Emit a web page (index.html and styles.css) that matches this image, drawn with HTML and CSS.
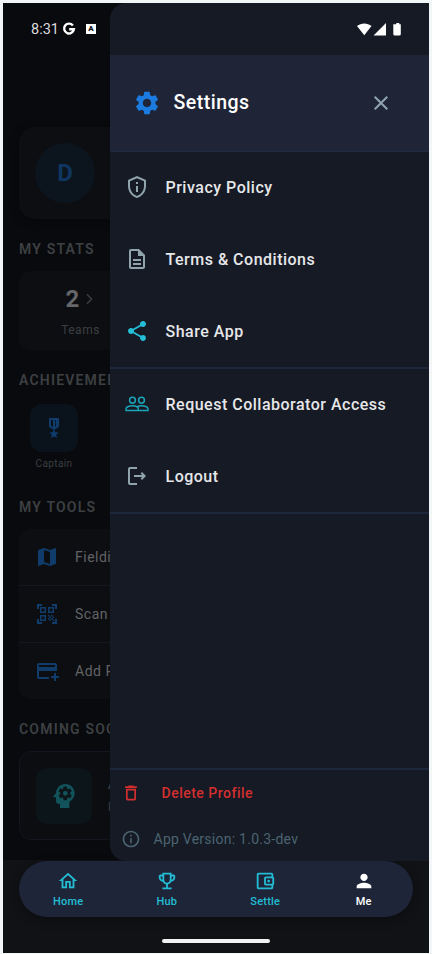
FILE: index.html
```html
<!DOCTYPE html>
<html lang="en">
<head>
<meta charset="utf-8">
<title>Settings</title>
<link rel="stylesheet" href="styles.css">
</head>
<body>
<div class="screen">
  <main class="page">
    <section class="profile"><div class="avatar">D</div></section>
    <h2 class="heading">MY STATS</h2>
    <section class="stats">
      <div class="stat">
        <div class="stat-value">2<svg class="chevron" viewBox="0 0 7 12"><path d="M1 1.2 5.6 6 1 10.8" fill="none" stroke="currentColor" stroke-width="1.4"/></svg></div>
        <div class="stat-label">Teams</div>
      </div>
    </section>
    <h2 class="heading">ACHIEVEMENTS</h2>
    <section class="badge">
      <div class="badge-tile"><svg class="i24" viewBox="0 0 24 24"><path d="M17 10.430V2H7v8.430c0 .35.18.68.49.86l4.180 2.510-.99 2.340-3.410.29 2.590 2.240L9.070 22 12 20.230 14.930 22l-.78-3.330 2.590-2.240-3.410-.29-.99-2.340 4.180-2.510c.3-.18.48-.5.48-.86zm-6 .64-2-1.200V4h2v7.070zm4-1.200-2 1.200V4h.7v6.500l1.300-.63z" fill-rule="evenodd"/></svg></div>
      <div class="badge-label">Captain</div>
    </section>
    <h2 class="heading">MY TOOLS</h2>
    <section class="tools">
      <div class="tool"><svg class="i24" viewBox="0 0 24 24"><path d="m20.500 3-.16.03L15 5.100 9 3 3.360 4.900c-.21.07-.36.25-.36.48V20.500c0 .28.22.5.5.5l.16-.03L9 18.900l6 2.100 5.640-1.900c.21-.07.36-.25.36-.48V3.500c0-.28-.22-.5-.5-.5zM15 19l-6-2.110V5l6 2.110V19z"/></svg>Fielding</div>
      <div class="tool"><svg class="i24" viewBox="0 0 24 24"><path d="M9.500 6.500v3h-3v-3h3M11 5H5v6h6V5zm-1.500 9.500v3h-3v-3h3M11 13H5v6h6v-6zm6.500-6.500v3h-3v-3h3M19 5h-6v6h6V5zm-6 8h1.500v1.500H13V13zm1.500 1.500H16V16h-1.500v-1.500zM16 13h1.500v1.500H16V13zm-3 3h1.500v1.500H13V16zm1.500 1.500H16V19h-1.500v-1.500zM16 16h1.500v1.500H16V16zm1.500-1.500H19V16h-1.500v-1.500zm0 3H19V19h-1.500v-1.500zM22 7h-2V4h-3V2h5v5zm0 15v-5h-2v3h-3v2h5zM2 22h5v-2H4v-3H2v5zM2 2v5h2V4h3V2H2z"/></svg>Scan</div>
      <div class="tool"><svg class="i24" viewBox="0 0 24 24"><path d="M20 4H4c-1.110 0-1.990.89-1.990 2L2 18c0 1.110.89 2 2 2h10v-2H4v-6h18V6c0-1.110-.89-2-2-2zm0 4H4V6h16v2zm4 9v2h-3v3h-2v-3h-3v-2h3v-3h2v3h3z"/></svg>Add P</div>
    </section>
    <h2 class="heading">COMING SOON</h2>
    <section class="soon">
      <div class="soon-tile"><svg class="i32" viewBox="0 0 24 24"><path fill-rule="evenodd" d="M13 3C9.230 3 6.190 5.950 6 9.660l-1.920 2.530c-.24.33 0 .81.42.81H6v3c0 1.100.9 2 2 2h1v3h7v-4.690c2.370-1.120 4-3.510 4-6.310 0-3.860-3.120-7-7-7zm3.600 7c0 .2-.01.39-.04.58l1.120.88c.1.08.13.23.06.34l-1 1.730c-.06.11-.2.150-.310.110l-1.240-.5c-.260.2-.540.370-.850.490l-.190 1.320c-.020.120-.120.210-.250.210h-2c-.120 0-.230-.090-.250-.210l-.190-1.320c-.300-.120-.590-.290-.850-.490l-1.240.5c-.110.040-.240 0-.310-.110l-1-1.730c-.060-.110-.040-.240.060-.320l1.060-.83A4 4 0 0 1 9.140 10c0-.2.010-.39.040-.58L8.120 8.590c-.090-.080-.120-.210-.060-.320l1-1.730c.060-.110.190-.150.310-.110l1.240.5c.260-.2.550-.370.850-.490l.190-1.320c.020-.120.130-.210.250-.210h2c.130 0 .230.090.250.210l.190 1.320c.300.120.590.290.850.490l1.240-.5c.110-.040.250 0 .310.110l1 1.730c.060.110.040.240-.060.320l-1.120.83c.030.190.040.380.040.580zM13 8.200a1.800 1.800 0 1 0 0 3.600 1.800 1.800 0 0 0 0-3.600z"/></svg></div>
      <div class="soon-text"><b>AI</b><span>P</span></div>
    </section>
  </main>

  <footer class="dock">
    <nav class="nav">
      <div class="nav-item"><svg viewBox="0 0 24 24"><path d="m12 5.690 5 4.500V18h-2v-6H9v6H7v-7.810l5-4.500M12 3 2 12h3v8h6v-6h2v6h6v-8h3L12 3z"/></svg>Home</div>
      <div class="nav-item"><svg viewBox="0 0 24 24"><path d="M19 5h-2V3H7v2H5c-1.100 0-2 .9-2 2v1c0 2.550 1.920 4.630 4.390 4.940.63 1.500 1.980 2.630 3.610 2.960V19H7v2h10v-2h-4v-3.100c1.630-.33 2.980-1.460 3.610-2.960C19.080 12.630 21 10.550 21 8V7c0-1.100-.9-2-2-2zM5 8V7h2v3.820C5.840 10.400 5 9.300 5 8zm7 6c-1.650 0-3-1.350-3-3V5h6v6c0 1.650-1.350 3-3 3zm7-6c0 1.300-.84 2.400-2 2.820V7h2v1z"/></svg>Hub</div>
      <div class="nav-item"><svg viewBox="0 0 24 24"><path d="M21 7.280V5c0-1.100-.9-2-2-2H5c-1.110 0-2 .9-2 2v14c0 1.100.89 2 2 2h14c1.100 0 2-.9 2-2v-2.280c.59-.35 1-.98 1-1.720V9c0-.74-.41-1.370-1-1.720zM20 9v6h-7V9h7zM5 19V5h14v2h-6c-1.100 0-2 .9-2 2v6c0 1.100.9 2 2 2h6v2H5z"/><circle cx="16" cy="12" r="1.500"/></svg>Settle</div>
      <div class="nav-item active"><svg viewBox="0 0 24 24"><path d="M12 12c2.210 0 4-1.790 4-4s-1.790-4-4-4-4 1.790-4 4 1.790 4 4 4zm0 2c-2.670 0-8 1.340-8 4v2h16v-2c0-2.660-5.330-4-8-4z"/></svg>Me</div>
    </nav>
    <div class="handle"></div>
  </footer>

  <aside class="drawer">
    <header class="drawer-head">
      <svg class="i28 gear" viewBox="0 0 24 24"><path d="M19.140 12.940c.04-.3.06-.61.06-.94 0-.32-.02-.64-.07-.94l2.030-1.580c.18-.14.23-.41.12-.61l-1.920-3.320c-.12-.22-.37-.29-.59-.22l-2.390.96c-.5-.38-1.030-.7-1.620-.94l-.36-2.540c-.04-.24-.24-.41-.48-.41h-3.840c-.24 0-.43.17-.47.41l-.36 2.540c-.59.24-1.130.57-1.620.94l-2.390-.96c-.22-.08-.47 0-.59.22L2.740 8.870c-.12.21-.08.47.12.61l2.030 1.580c-.05.3-.09.63-.09.94s.02.64.07.94l-2.030 1.580c-.18.14-.23.41-.12.61l1.920 3.320c.12.22.37.29.59.22l2.390-.96c.5.38 1.030.7 1.620.94l.36 2.540c.05.24.24.41.48.41h3.840c.24 0 .44-.17.47-.41l.36-2.540c.59-.24 1.130-.56 1.620-.94l2.390.96c.22.08.47 0 .59-.22l1.920-3.320c.12-.22.07-.47-.12-.61l-2.010-1.580zM12 15.600c-1.980 0-3.600-1.620-3.600-3.600s1.620-3.600 3.600-3.600 3.600 1.620 3.600 3.600-1.620 3.600-3.600 3.600z"/></svg>
      <h1>Settings</h1>
      <svg class="i24 grey" viewBox="0 0 24 24"><path d="M19 6.410 17.590 5 12 10.590 6.410 5 5 6.410 10.590 12 5 17.590 6.410 19 12 13.410 17.590 19 19 17.590 13.410 12z"/></svg>
    </header>
    <div class="group">
      <div class="item"><svg class="i24 grey" viewBox="0 0 24 24"><path d="M12 1 3 5v6c0 5.550 3.840 10.740 9 12 5.160-1.260 9-6.450 9-12V5l-9-4zm7 10c0 4.520-2.980 8.690-7 9.930-4.020-1.240-7-5.410-7-9.930V6.300l7-3.110 7 3.110V11zm-8 0h2v6h-2v-6zm0-4h2v2h-2V7z"/></svg>Privacy Policy</div>
      <div class="item"><svg class="i24 grey" viewBox="0 0 24 24"><path d="M8 16h8v2H8zm0-4h8v2H8zm6-10H6c-1.100 0-2 .9-2 2v16c0 1.100.89 2 1.990 2H18c1.100 0 2-.9 2-2V8l-6-6zm4 18H6V4h7v5h5v11z"/></svg>Terms &amp; Conditions</div>
      <div class="item"><svg class="i24 cyan" viewBox="0 0 24 24"><path d="M18 16.080c-.76 0-1.440.3-1.960.77L8.910 12.700c.05-.23.09-.46.09-.7s-.04-.47-.09-.7l7.050-4.110c.54.5 1.250.81 2.040.81 1.660 0 3-1.340 3-3s-1.340-3-3-3-3 1.340-3 3c0 .24.04.47.09.7L8.040 9.810C7.500 9.310 6.790 9 6 9c-1.660 0-3 1.340-3 3s1.340 3 3 3c.79 0 1.500-.31 2.040-.81l7.120 4.160c-.05.21-.08.43-.08.65 0 1.610 1.310 2.920 2.920 2.920s2.920-1.310 2.920-2.920-1.310-2.920-2.920-2.920z"/></svg>Share App</div>
    </div>
    <div class="group">
      <div class="item"><svg class="i24 teal" viewBox="0 0 24 24"><g fill="none" stroke="currentColor" stroke-width="1.500"><circle cx="7.500" cy="8.250" r="2.900"/><circle cx="16.500" cy="8.250" r="2.900"/><path d="M1.050 18.550h21.900V16.500c0-1.500-3.500-2.750-6.450-2.750-1.700 0-3.300.35-4.500 1-1.200-.65-2.800-1-4.500-1-2.950 0-6.450 1.250-6.450 2.750zM12 14.750c.8.500 1.250 1.100 1.250 1.750v1.750"/></g></svg>Request Collaborator Access</div>
      <div class="item"><svg class="i24 grey" viewBox="0 0 24 24"><path d="m17 8-1.410 1.410L17.170 11H9v2h8.170l-1.580 1.580L17 16l4-4zM5 5h7V3H5c-1.100 0-2 .9-2 2v14c0 1.100.9 2 2 2h7v-2H5V5z"/></svg>Logout</div>
    </div>
    <div class="drawer-foot">
      <div class="delete"><svg viewBox="0 0 24 24"><path d="M16 9v10H8V9h8m-1.500-6h-5l-1 1H5v2h14V4h-3.500l-1-1zM18 7H6v12c0 1.100.9 2 2 2h8c1.100 0 2-.9 2-2V7z"/></svg>Delete Profile</div>
      <div class="version"><svg viewBox="0 0 24 24"><path d="M11 7h2v2h-2zm0 4h2v6h-2zm1-9C6.480 2 2 6.480 2 12s4.480 10 10 10 10-4.480 10-10S17.520 2 12 2zm0 18c-4.410 0-8-3.590-8-8s3.590-8 8-8 8 3.590 8 8-3.590 8-8 8z"/></svg>App Version: 1.0.3-dev</div>
    </div>
  </aside>

  <div class="status">
    <span class="time">8:31</span>
    <svg class="g-logo" viewBox="0 0 12 12"><path d="M9.900 2.500A4.900 4.900 0 1 0 10.900 6.200H6.200" fill="none" stroke="currentColor" stroke-width="2.400"/></svg>
    <span class="a-box">A</span>
    <svg class="signals" viewBox="0 0 45 13"><path d="M1 3C5.200-.4 11.300-.4 15.500 3L8.250 12.300zM30 0v12.500H17.500zM38.300 1.200h2V0h3v1.200h1.500V11q0 1.500-1.500 1.500h-4.500q-1.500 0-1.500-1.500V1.200z"/></svg>
  </div>
</div>
</body>
</html>
```
FILE: styles.css
```css
* { box-sizing: border-box; }

body {
  margin: 0;
  padding: 3px 3px 1px;
  background: #f3f6f6;
  font-family: Roboto, "Liberation Sans", sans-serif;
  color: #e6e7e9;
}

svg { display: block; flex: none; fill: currentColor; overflow: visible; }
.i24 { width: 24px; height: 24px; }
.i28 { width: 28px; height: 28px; }
.i32 { width: 32px; height: 32px; }
.grey { color: #90a4ae; }
.cyan { color: #22bfd6; }
.teal { color: #1ba5b9; }

.screen {
  position: relative;
  display: flex;
  flex-direction: column;
  width: 426px;
  height: 950px;
  overflow: hidden;
  background: #090a0d;
}

/* Dimmed page behind the drawer */
.page { height: 857px; padding: 124px 16px 0; overflow: hidden; }

.profile {
  height: 92px;
  padding: 16px;
  border-radius: 16px;
  background: #0d0e12;
  box-shadow: 0 2px 8px #07080a;
}

.avatar {
  display: grid;
  place-items: center;
  width: 60px;
  height: 60px;
  border-radius: 50%;
  background: #0c141e;
  color: #10365f;
  font-size: 24px;
  font-weight: 700;
}

.heading {
  margin: 0;
  height: 52px;
  padding-top: 8px;
  font-size: 14px;
  line-height: 44px;
  font-weight: 600;
  letter-spacing: 1.2px;
  color: #3d4043;
  white-space: nowrap;
}

.stats { height: 79px; border-radius: 12px; background: #0d0e12; }
.stat { width: 123px; padding-top: 13px; text-align: center; }
.stat-value {
  display: flex;
  justify-content: center;
  align-items: center;
  gap: 7px;
  height: 30px;
  padding-right: 2px;
  font-size: 24px;
  font-weight: 700;
  color: #666769;
}
.chevron { width: 7px; height: 12px; color: #3b3f42; }
.stat-label { margin-top: 8px; font-size: 12px; line-height: 16px; letter-spacing: .5px; color: #3b3f42; }

.badge { width: 70px; height: 75px; padding-top: 2px; display: flex; flex-direction: column; align-items: center; }
.badge-tile {
  display: grid;
  place-items: center;
  width: 48px;
  height: 48px;
  border-radius: 12px;
  background: #0a121b;
  color: #103c6c;
}
.badge-label { margin-top: 5px; font-size: 10px; line-height: 14px; letter-spacing: .4px; color: #3b3f42; }

.tools { height: 170px; border-radius: 12px; background: #0d0e12; }
.tool {
  display: flex;
  align-items: center;
  gap: 16px;
  height: 57px;
  padding-left: 16px;
  font-size: 14px;
  letter-spacing: .5px;
  color: #626365;
}
.tool:first-child { height: 56px; }
.tool + .tool { border-top: 1px solid #121720; }
.tool svg { color: #103c6c; }

.soon {
  display: flex;
  align-items: center;
  gap: 16px;
  height: 89px;
  padding-left: 16px;
  border: 1px solid #13151f;
  border-radius: 12px;
  background: #0c0d11;
}
.soon-tile {
  display: grid;
  place-items: center;
  width: 56px;
  height: 56px;
  border-radius: 12px;
  background: #0c1519;
  color: #12525b;
}
.soon-text { display: flex; flex-direction: column; gap: 6px; font-size: 12px; line-height: 16px; color: #3b3f42; }

/* Bottom navigation */
.dock {
  height: 93px;
  padding: 1px 16px 0;
  background: #111215;
}
.nav {
  display: flex;
  height: 56px;
  border-radius: 28px;
  background: #1f2538;
  box-shadow: 0 3px 8px #0c0d10;
}
.nav-item {
  flex: 1;
  display: flex;
  flex-direction: column;
  align-items: center;
  padding-top: 9px;
  font-size: 11px;
  line-height: 14px;
  font-weight: 500;
  letter-spacing: .2px;
  color: #22bdd4;
}
.nav-item svg { width: 22px; height: 22px; margin-bottom: 3px; }
.nav-item.active { color: #fff; }
.handle { width: 108px; height: 4px; margin: 22px auto 0; border-radius: 2px; background: #f2f2f2; }

/* Settings drawer over the page */
.drawer {
  position: absolute;
  top: 0;
  right: 0;
  display: flex;
  flex-direction: column;
  width: 319.500px;
  height: 858px;
  padding-top: 52px;
  border-radius: 16px 0 0 16px;
  background: #161a25;
}
.drawer-head {
  display: flex;
  align-items: center;
  height: 97px;
  padding: 0 36px 0 23.500px;
  border-bottom: 1px solid #202b42;
  background: #1f2537;
}
.gear { color: #1b7be0; }
h1 {
  flex: 1;
  margin: 0 0 0 12.500px;
  font-size: 19.500px;
  line-height: 24px;
  font-weight: 500;
  letter-spacing: .5px;
  color: #fff;
}
.group { margin-top: -1px; border-bottom: 2px solid #1d273c; }
.item {
  display: flex;
  align-items: center;
  gap: 16.500px;
  height: 72px;
  padding-left: 15.500px;
  font-size: 16px;
  font-weight: 500;
  letter-spacing: .5px;
}
.drawer-foot { margin-top: auto; height: 93px; border-top: 2px solid #1d273c; }
.delete {
  display: flex;
  align-items: center;
  gap: 20.500px;
  height: 46px;
  padding-left: 11.500px;
  font-size: 14px;
  font-weight: 500;
  letter-spacing: .5px;
  color: #d32f2f;
}
.delete svg { width: 20px; height: 20px; }
.version {
  display: flex;
  align-items: center;
  gap: 12.500px;
  height: 46px;
  padding-left: 11.500px;
  font-size: 14px;
  letter-spacing: .25px;
  color: #4a6470;
}
.version svg { width: 20px; height: 20px; }

/* System status bar over everything */
.status {
  position: absolute;
  top: 0;
  left: 0;
  display: flex;
  align-items: center;
  width: 100%;
  height: 52px;
  padding: 0 28px;
  color: #fff;
}
.time { width: 32px; font-size: 14.500px; color: #dcdcdd; }
.g-logo { width: 12px; height: 12px; }
.a-box {
  display: grid;
  place-items: center;
  width: 10px;
  height: 10px;
  margin-left: 11px;
  background: #fff;
  color: #111;
  font-size: 8px;
  line-height: 10px;
  font-weight: 900;
}
.signals { width: 45px; height: 13px; margin-left: auto; }
```
